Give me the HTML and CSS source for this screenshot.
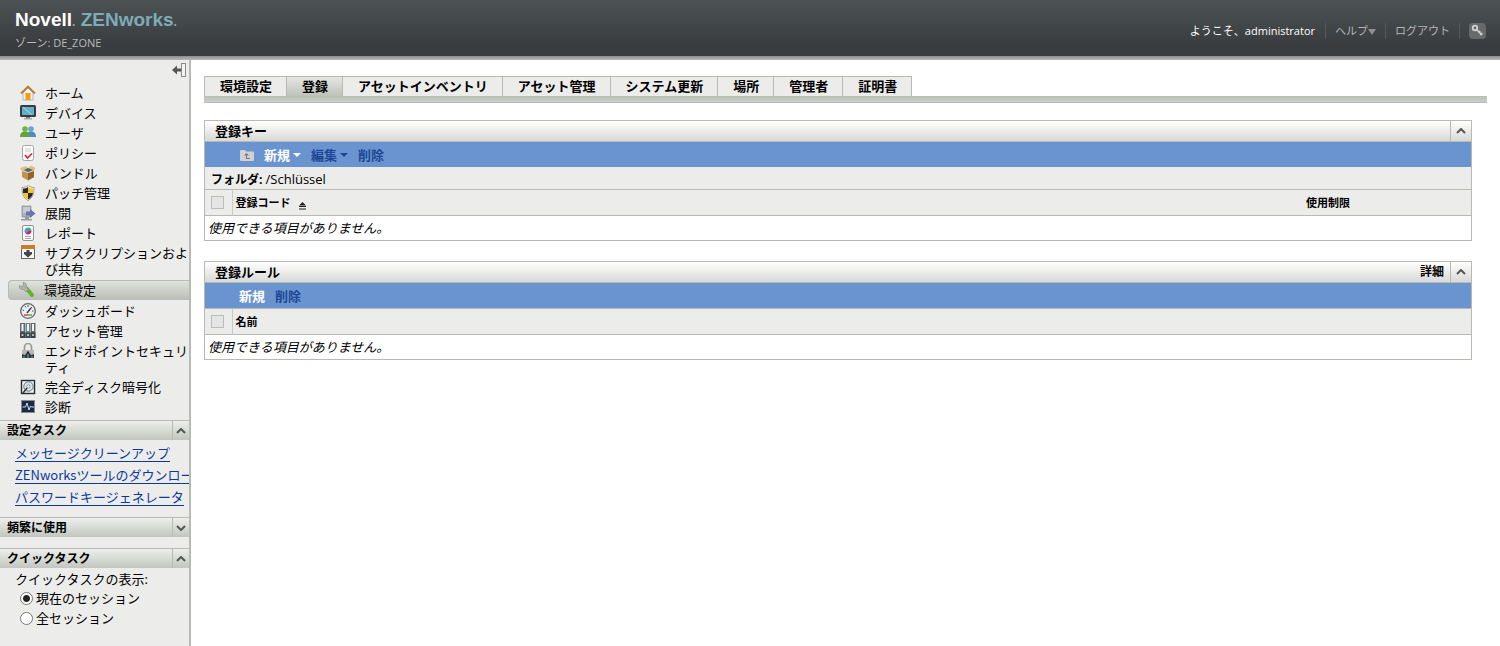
FILE: index.html
```
<!DOCTYPE html>
<html lang="ja">
<head>
    <meta charset="UTF-8">
    <meta name="viewport" content="width=device-width, initial-scale=1.0">
    <title>Novell ZENworks</title>
    <link rel="stylesheet" href="styles.css">
</head>
<body>
    <header class="topbar">
        <div class="brand">
            <div class="logo">Novell<small>.</small> <span>ZENworks<small>.</small></span></div>
            <div class="zone">ゾーン: DE_ZONE</div>
        </div>
        <div class="user-nav">
            <span class="welcome">ようこそ、administrator</span>
            <a href="#">ヘルプ<svg width="8" height="6" viewBox="0 0 8 6"><path d="M0 0h8L4 6z" fill="#8d9192"/></svg></a>
            <a href="#">ログアウト</a>
            <button class="key-button" aria-label="キー">
                <svg width="17" height="16" viewBox="0 0 17 16"><rect width="17" height="16" rx="4" fill="#676a6b"/><circle cx="6" cy="5" r="2.3" fill="none" stroke="#d0d1d1" stroke-width="1.8"/><path d="M7.5 6.5l5.5 5.5M9.6 9.8l1.6-1.6M11.3 12l2-2" stroke="#d0d1d1" stroke-width="1.7"/></svg>
            </button>
        </div>
    </header>

    <div class="layout">
        <aside class="sidebar">
            <div class="collapse-row">
                <button class="collapse" aria-label="閉じる">
                    <svg width="14" height="14" viewBox="0 0 14 14"><path d="M0 7l5-4.500v3h4v3H5v3z" fill="#555"/><rect x="9.500" y=".5" width="4" height="13" fill="#f3f3f3" stroke="#8a8a8a"/></svg>
                </button>
            </div>

            <nav class="menu">
                <a href="#"><svg viewBox="0 0 16 16"><path d="M3 8l5-5 5 5v7H3z" fill="#f4f4f6" stroke="#b5b5bf"/><path d="M1 8.500L8 1.500l7 7" fill="none" stroke="#b97d2b" stroke-width="1.800"/><path d="M5.500 8h5v7h-5z" fill="#f59a0c"/></svg>ホーム</a>
                <a href="#"><svg viewBox="0 0 16 16"><rect x="0" y="0" width="16" height="12" rx="1.500" fill="#333c43"/><rect x="2" y="2" width="12" height="8" fill="#66adc8"/><path d="M3 2l9 8" stroke="#a5d8e8"/><path d="M6 12h4v1.500H6z" fill="#777"/><path d="M4 13h8v1.500H4z" fill="#aaa"/></svg>デバイス</a>
                <a href="#"><svg viewBox="0 0 16 16"><circle cx="11" cy="4" r="2.800" fill="#6ba7ca"/><path d="M6 12c0-4 2-5.500 5-5.500s5 1.500 5 5.500z" fill="#4b8fbd"/><circle cx="5" cy="4" r="2.800" fill="#76b447"/><path d="M0 12c0-4 2-5.500 5-5.500S9.500 8 9.500 12z" fill="#63a33a"/></svg>ユーザ</a>
                <a href="#"><svg viewBox="0 0 16 16"><rect x="2.500" y=".5" width="11" height="15" rx="2" fill="#fbfbfb" stroke="#a6a6a6"/><path d="M5 4h6M5 6h6" stroke="#ccc"/><path d="M5 10l2.500 3L12 8.500" fill="none" stroke="#dc2430" stroke-width="1.600"/></svg>ポリシー</a>
                <a href="#"><svg viewBox="0 0 16 16"><path d="M2 6l6 2 6-2v6l-6 3.500L2 12z" fill="#c3924e"/><path d="M8 8l6-2v6l-6 3.500z" fill="#956229"/><path d="M2 6L0 3l6-2 2 2 3-2.500L15.500 3 14 6 8 8z" fill="#e3bd82"/><path d="M4 5l4-2 5 2-5 2z" fill="#356f83"/></svg>バンドル</a>
                <a href="#"><svg viewBox="0 0 16 16"><path d="M8 .5c2 1.500 4 2 6 2 0 6-1 10-6 13-5-3-6-7-6-13 2 0 4-.5 6-2z" fill="#fff" stroke="#999"/><path d="M8 2v6H3V3.500C5 3.500 6.500 3 8 2z" fill="#292929"/><path d="M8 2v6h5V3.500C11 3.500 9.500 3 8 2z" fill="#f7c51e"/><path d="M3 8h5v6.500C5 13 3.500 11 3 8z" fill="#f7c51e"/><path d="M8 8h5c-.5 3-2 5-5 6.500z" fill="#292929"/></svg>パッチ管理</a>
                <a href="#"><svg viewBox="0 0 16 16"><path d="M2 1h9v11H2z" fill="#aeb2b8" stroke="#858a90" stroke-width=".7"/><path d="M3 3h7M3 5h7M3 7h7" stroke="#e2e4e7"/><path d="M5 12h4v2h3v1.500H1V14h4z" fill="#999"/><path d="M6 6.500h4V4l5.500 4.500L10 13v-2.500H6z" fill="#6477b2"/></svg>展開</a>
                <a href="#"><svg viewBox="0 0 16 16"><rect x="2.500" y=".5" width="11" height="15" rx="1.500" fill="#fafafa" stroke="#929292"/><path d="M8 6V2.500A3.500 3.500 0 0 0 5.500 8.500z" fill="#39a4df"/><path d="M8 6V2.500a3.500 3.500 0 0 1 3.500 3.500z" fill="#39b45a"/><path d="M8 6h3.500a3.500 3.500 0 0 1-6 2.500z" fill="#e21683"/><path d="M5 11.500h6M5 13.500h6" stroke="#aaa"/></svg>レポート</a>
                <a href="#"><svg viewBox="0 0 16 16"><rect x="1.500" y=".5" width="13" height="13" fill="#f7f7f7" stroke="#666"/><path d="M1 0h14v4H1z" fill="#cb7c27"/><path d="M6.500 5h3v2H12v2l-4 3.500L4 9V7h2.500z" fill="#444"/></svg>サブスクリプションおよび共有</a>
                <a href="#" class="active"><svg viewBox="0 0 16 16"><path d="M7.500 6.500l5.500 6.500" stroke="#67af2c" stroke-width="4" stroke-linecap="round"/><path d="M4 0l.5 3L2.500 4.500 0 3.500c0 3 2 4.500 4.500 4L7 10l2.500-2.500-2-2.500C8 2.500 6.500.5 4 0z" fill="#aeb2ae" stroke="#858a85" stroke-width=".6"/></svg>環境設定</a>
                <a href="#"><svg viewBox="0 0 16 16"><circle cx="8" cy="8" r="7.300" fill="#ececf3" stroke="#65656f" stroke-width="1.300"/><path d="M2.500 7l1.500.5M5 3l1 1.500M8 2v2M12 4l-1 1M13.500 8H12" stroke="#555"/><path d="M7 10l4-5" stroke="#333" stroke-width="1.300"/><path d="M4 12h4" stroke="#df4045" stroke-width="1.500"/><path d="M8 12h4" stroke="#46b04c" stroke-width="1.500"/></svg>ダッシュボード</a>
                <a href="#"><svg viewBox="0 0 16 16"><path d="M0 0h5v15H0z" fill="#66696b"/><path d="M5.500 0h4.500v15H5.500z" fill="#618795"/><path d="M10.500 0h5v15h-5z" fill="#66696b"/><path d="M1.500 1h2v7h-2zM7 1h2v7H7zM12 1h2v7h-2z" fill="#f1f3f4"/><path d="M0 9.500h15.500V15H0z" fill="#25282a" opacity=".6"/><circle cx="2.500" cy="12" r="1" fill="#ddd"/><circle cx="8" cy="12" r="1" fill="#ddd"/><circle cx="13" cy="12" r="1" fill="#ddd"/></svg>アセット管理</a>
                <a href="#"><svg viewBox="0 0 16 16"><path d="M4.500 8V4a3.500 3.500 0 0 1 7 0v4" fill="none" stroke="#999" stroke-width="1.700"/><path d="M2 7h12v7.500H2z" fill="#b5b8b8"/><path d="M2 11l3 1 3-4 3 4 3-1v4H2z" fill="#313b3b"/><path d="M4 15v-2M8 15v-4M12 15v-2" stroke="#60aaa0"/><circle cx="8" cy="9.500" r="1" fill="#222"/></svg>エンドポイントセキュリティ</a>
                <a href="#"><svg viewBox="0 0 16 16"><rect x="1.500" y="1.500" width="13" height="13" fill="#f2f4f4" stroke="#222e34" stroke-width="1.400"/><circle cx="8.500" cy="7.500" r="4.700" fill="#dce4e6" stroke="#647078"/><circle cx="8.500" cy="7.500" r="1.600" fill="#fff" stroke="#68757b" stroke-width=".8"/><path d="M3 14l4-5" stroke="#333" stroke-width="1.500"/></svg>完全ディスク暗号化</a>
                <a href="#"><svg viewBox="0 0 16 16"><rect x="1.500" y="1.500" width="13" height="12" fill="#192b48" stroke="#8b8b8b"/><path d="M2.500 8h3L7 4l2 7 1.500-4 1 1h2.500" fill="none" stroke="#c7dcf4"/></svg>診断</a>
            </nav>

            <section>
                <h2 class="side-head">設定タスク<button aria-label="折りたたむ"><svg viewBox="0 0 10 6"><path d="M1 5l4-4 4 4"/></svg></button></h2>
                <div class="task-links">
                    <a href="#">メッセージクリーンアップ</a>
                    <a href="#">ZENworksツールのダウンロー</a>
                    <a href="#">パスワードキージェネレータ</a>
                </div>
            </section>
            <section class="frequent">
                <h2 class="side-head">頻繁に使用<button aria-label="展開する"><svg viewBox="0 0 10 6"><path d="M1 1l4 4 4-4"/></svg></button></h2>
            </section>
            <section>
                <h2 class="side-head">クイックタスク<button aria-label="折りたたむ"><svg viewBox="0 0 10 6"><path d="M1 5l4-4 4 4"/></svg></button></h2>
                <fieldset class="quick">
                    <legend>クイックタスクの表示:</legend>
                    <label><input type="radio" name="session" checked>現在のセッション</label>
                    <label><input type="radio" name="session">全セッション</label>
                </fieldset>
            </section>
        </aside>

        <main class="content">
            <nav class="tabs">
                <a href="#">環境設定</a>
                <a href="#" class="active">登録</a>
                <a href="#">アセットインベントリ</a>
                <a href="#">アセット管理</a>
                <a href="#">システム更新</a>
                <a href="#">場所</a>
                <a href="#">管理者</a>
                <a href="#">証明書</a>
            </nav>

            <!-- Registration keys -->
            <section class="panel">
                <div class="panel-head">
                    <h2>登録キー</h2>
                    <button class="toggle" aria-label="折りたたむ"><svg viewBox="0 0 10 6"><path d="M1 5l4-4 4 4"/></svg></button>
                </div>
                <div class="toolbar">
                    <button class="up" aria-label="上のフォルダ"><svg width="15" height="12" viewBox="0 0 15 12"><path d="M1 2q0-1 1-1h4l1 1.500h7q1 0 1 1V11q0 1-1 1H2q-1 0-1-1z" fill="#d2d2d2"/><path d="M7.500 4L5 6.500h2V10h4V9H8V6.500h2z" fill="#777"/></svg></button>
                    <button class="enabled">新規<svg width="8" height="4" viewBox="0 0 8 4"><path d="M0 0h8L4 4z" fill="currentColor"/></svg></button>
                    <button>編集<svg width="8" height="4" viewBox="0 0 8 4"><path d="M0 0h8L4 4z" fill="currentColor"/></svg></button>
                    <button>削除</button>
                </div>
                <div class="folder"><b>フォルダ:</b> <span>/Schlüssel</span></div>
                <table>
                    <thead>
                        <tr>
                            <th class="check"><input type="checkbox" aria-label="すべて選択" disabled></th>
                            <th>登録コード<svg class="sort" width="7" height="9" viewBox="0 0 7 9"><path d="M0 4.500L3.500 1 7 4.500zM0 5h7v1H0zM0 7.500h7v1H0z" fill="#222"/></svg></th>
                            <th class="limit">使用制限</th>
                        </tr>
                    </thead>
                    <tbody>
                        <tr><td colspan="3">使用できる項目がありません。</td></tr>
                    </tbody>
                </table>
            </section>

            <!-- Registration rules -->
            <section class="panel">
                <div class="panel-head">
                    <h2>登録ルール</h2>
                    <a href="#">詳細</a>
                    <button class="toggle" aria-label="折りたたむ"><svg viewBox="0 0 10 6"><path d="M1 5l4-4 4 4"/></svg></button>
                </div>
                <div class="toolbar line">
                    <button class="enabled">新規</button>
                    <button>削除</button>
                </div>
                <table>
                    <thead>
                        <tr>
                            <th class="check"><input type="checkbox" aria-label="すべて選択" disabled></th>
                            <th>名前</th>
                        </tr>
                    </thead>
                    <tbody>
                        <tr><td colspan="2">使用できる項目がありません。</td></tr>
                    </tbody>
                </table>
            </section>
        </main>
    </div>
</body>
</html>
```
FILE: styles.css
```
* {
    box-sizing: border-box;
}

body {
    margin: 0;
    min-height: 100vh;
    display: flex;
    flex-direction: column;
    font-family: "Open Sans", "Noto Sans CJK JP", sans-serif;
    font-size: 13px;
    line-height: 16px;
    color: #000;
    background: #fff;
}

button {
    font: inherit;
    border: none;
    padding: 0;
    background: none;
    cursor: pointer;
}

h2 {
    margin: 0;
    font-size: 13px;
}

/* Header */
.topbar {
    display: flex;
    justify-content: space-between;
    height: 60px;
    padding: 0 14px 4px 15px;
    background: linear-gradient(#4d5254, #393d3f 44px, #393d3f 56px, #8c8c8c 56px, #b9b9b9);
}

.brand {
    padding-top: 9px;
}

.logo {
    font: bold 19px/22px "Liberation Sans", sans-serif;
    color: #fff;
}

.logo span {
    color: #7dabb7;
}

.logo small {
    font-size: 12px;
    color: #9ba5a8;
}

.zone {
    margin-top: 2px;
    font-size: 11px;
    color: #b8baba;
}

.user-nav {
    display: flex;
    align-items: center;
    padding-top: 6px;
    font-size: 11px;
}

.welcome {
    color: #fff;
    padding-right: 10px;
}

.user-nav a,
.key-button {
    padding: 0 9px;
    border-left: 1px solid #565a5c;
    color: #b3b5b5;
    text-decoration: none;
}

.key-button {
    height: 16px;
    padding-right: 0;
}

.key-button svg {
    display: block;
}

.layout {
    flex: 1;
    display: flex;
}

/* Sidebar */
.sidebar {
    width: 191px;
    flex: none;
    background: #ececeb;
    border-right: 2px solid #b9bab4;
}

.collapse-row {
    display: flex;
    justify-content: flex-end;
    height: 23px;
    padding: 3px 3px 0 0;
}

.collapse {
    height: 14px;
}

.collapse svg {
    display: block;
}

.menu {
    padding: 0 0 3px 8px;
}

.menu a {
    display: flex;
    align-items: flex-start;
    gap: 9px;
    padding: 2px 0 2px 12px;
    color: #000;
    text-decoration: none;
}

.menu svg {
    width: 16px;
    height: 16px;
    flex: none;
}

.menu .active {
    margin: 1px 0;
    padding: 1px 0 1px 10px;
    border: 1px solid #b9bcb3;
    border-right: none;
    border-radius: 4px 0 0 4px;
    background: linear-gradient(#dfe1dd, #bcc0b8);
}

.side-head {
    display: flex;
    justify-content: space-between;
    height: 20px;
    padding-left: 7px;
    font-size: 12px;
    line-height: 20px;
    border-top: 1px solid #b9bab4;
    background: linear-gradient(#eeefed, #c3c6bf);
}

.side-head button {
    width: 17px;
    border-left: 1px solid #b9bab4;
    display: flex;
    align-items: center;
    justify-content: center;
}

.side-head svg,
.toggle svg {
    width: 10px;
    height: 6px;
    fill: none;
    stroke: #555;
    stroke-width: 2;
}

/* Long task names are clipped at the sidebar edge */
.task-links {
    display: flex;
    flex-direction: column;
    align-items: flex-start;
    gap: 5px;
    padding: 5px 0 11px 15px;
    font-family: "Noto Sans CJK JP", sans-serif;
    overflow: hidden;
    white-space: nowrap;
}

.task-links a {
    color: #0b3a9b;
    text-decoration: none;
    border-bottom: 1px solid #0b3a9b;
}

.task-links a:hover,
.user-nav a:hover {
    color: #5d90d8;
}

.frequent {
    padding-bottom: 11px;
}

.quick {
    margin: 0;
    padding: 1px 0 0 15px;
    border: none;
}

.quick legend {
    padding: 3px 0 0;
}

.quick label {
    display: flex;
    align-items: center;
    height: 20px;
    gap: 3px;
    padding-left: 5px;
}

.quick input {
    width: 13px;
    height: 13px;
    margin: 0;
    appearance: none;
    border: 1px solid #777;
    border-radius: 50%;
    background: #fff;
}

.quick input:checked {
    background: radial-gradient(circle, #222 3px, #fff 4px);
}

/* Content */
.content {
    flex: 1;
    min-width: 0;
    padding: 16px 13px 0;
}

.tabs {
    display: flex;
    padding-bottom: 6px;
    border-bottom: 1px solid #b9bab4;
    background: linear-gradient(#babcb5, #cccec9) bottom / 100% 6px no-repeat;
}

.tabs a {
    height: 20px;
    padding: 1px 14px 0 15px;
    border: 1px solid #b9bab4;
    border-width: 1px 0 0 1px;
    background: #ececeb;
    color: #000;
    font-weight: bold;
    text-decoration: none;
}

.tabs a:last-child {
    border-right-width: 1px;
}

.tabs .active {
    background: linear-gradient(#e5e7e3, #bfc2bb);
}

.panel {
    margin: 17px 15px 20px 0;
    border: 1px solid #b9bab4;
}

.panel + .panel {
    margin-top: 0;
}

.panel-head {
    display: flex;
    height: 21px;
    padding-left: 10px;
    line-height: 20px;
    border-bottom: 1px solid #b9bab4;
    background: linear-gradient(#fff, #d8dad6);
}

.panel-head h2 {
    flex: 1;
}

.panel-head a {
    margin-right: 6px;
    font-size: 12px;
    font-weight: bold;
    color: #000;
    text-decoration: none;
}

.toggle {
    display: flex;
    align-items: center;
    justify-content: center;
    width: 21px;
    border-left: 1px solid #b9bab4;
}

.toolbar {
    display: flex;
    align-items: center;
    gap: 10px;
    height: 25px;
    padding-left: 34px;
    background: #6a94cf;
}

.toolbar.line {
    height: 26px;
    border-bottom: 1px solid #b9bab4;
}

.toolbar button {
    display: flex;
    align-items: center;
    gap: 3px;
    font-weight: bold;
    color: #1d4792;
}

.toolbar .enabled {
    color: #fff;
}

.folder {
    height: 23px;
    padding: 4px 6px 0;
    font-size: 12px;
    background: #ececeb;
    border-bottom: 1px solid #b9bab4;
}

.folder span {
    font-size: 13px;
}

table {
    width: 100%;
    border-collapse: collapse;
    table-layout: fixed;
}

th {
    height: 25px;
    padding: 2px 3px 0;
    font-size: 11px;
    text-align: left;
    background: #ececeb;
}

thead {
    border-bottom: 1px solid #b9bab4;
}

.check {
    width: 27px;
    padding: 0 6px;
    border-right: 1px solid #cacac6;
}

.check input {
    display: block;
    width: 13px;
    height: 13px;
    margin: 0;
    appearance: none;
    border: 1px solid #bcbcbc;
    background: #e5e5e5;
}

.limit {
    width: 168px;
}

.sort {
    margin-left: 8px;
    vertical-align: -3px;
}

td {
    height: 25px;
    padding: 0 3px;
    font-style: italic;
}
```
